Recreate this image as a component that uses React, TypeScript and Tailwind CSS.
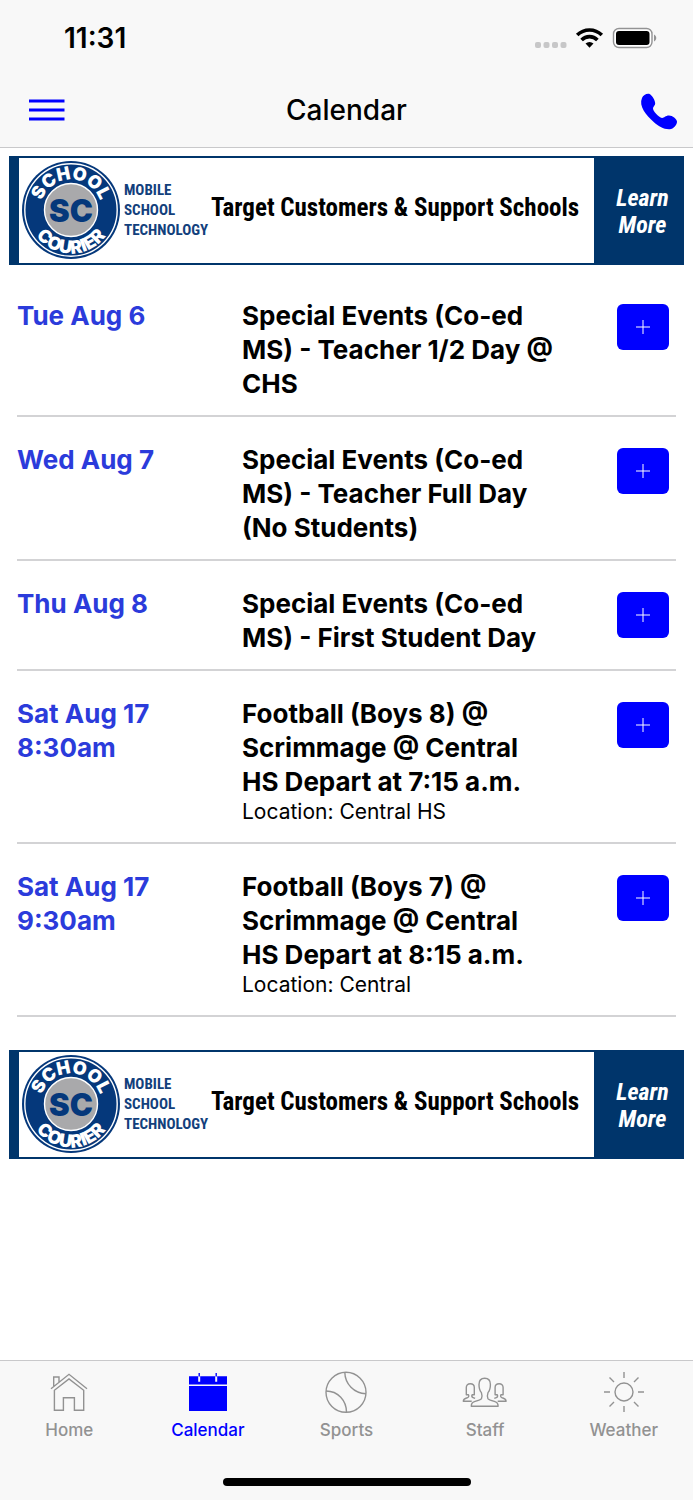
import React, { useState } from "react";

const events = [
  { day: "Tue Aug 6", title: "Special Events (Co-ed MS) - Teacher 1/2 Day @ CHS" },
  { day: "Wed Aug 7", title: "Special Events (Co-ed MS) - Teacher Full Day (No Students)" },
  { day: "Thu Aug 8", title: "Special Events (Co-ed MS) - First Student Day" },
  { day: "Sat Aug 17", time: "8:30am", title: "Football (Boys 8) @ Scrimmage @ Central HS Depart at 7:15 a.m.", location: "Central HS" },
  { day: "Sat Aug 17", time: "9:30am", title: "Football (Boys 7) @ Scrimmage @ Central HS Depart at 8:15 a.m.", location: "Central" },
];

function Seal({ id }: { id: string }) {
  return (
    <svg viewBox="0 0 98 98" className="h-[98px] w-[98px] shrink-0" role="img" aria-label="School Courier">
      <defs>
        <path id={`${id}-top`} d="M18.500 49a30.500 30.500 0 0 1 61 0" />
        <path id={`${id}-bottom`} d="M5.500 49a43.500 43.500 0 0 0 87 0" />
      </defs>
      <circle cx="49" cy="49" r="49" fill="#05387b" />
      <circle cx="49" cy="49" r="46.200" fill="none" stroke="#fff" strokeWidth="1.400" />
      <circle cx="49" cy="49" r="26.500" fill="#a9a9ab" stroke="#fff" strokeWidth="1.400" />
      <g fill="#fff" fontFamily="Inter, sans-serif" fontWeight="900" fontSize="18" textAnchor="middle">
        <text><textPath href={`#${id}-top`} startOffset="50%">SCHOOL</textPath></text>
        <text><textPath href={`#${id}-bottom`} startOffset="50%">COURIER</textPath></text>
      </g>
      <text x="49" y="61" textAnchor="middle" fill="#05387b" fontFamily="Inter, sans-serif" fontWeight="900" fontSize="31">SC</text>
    </svg>
  );
}

function Banner({ id }: { id: string }) {
  return (
    <a
      href="#learn-more"
      className="mx-[9px] flex h-[109px] border-y-2 border-l-[10px] border-[#00356b] bg-white font-['Liberation_Sans_Narrow','Roboto_Condensed','Liberation_Sans',sans-serif] font-bold"
    >
      <span className="flex flex-1 items-center pb-[2px] pl-[3px]">
        <Seal id={id} />
        <span className="ml-1 w-[87px] text-[15px] leading-5 text-[#12407c]">
          MOBILE
          <br />
          SCHOOL
          <br />
          TECHNOLOGY
        </span>
        <span className="flex-1 whitespace-nowrap pb-1 text-[25px] leading-7 text-black">Target Customers &amp; Support Schools</span>
      </span>
      <span className="flex w-[90px] shrink-0 items-center justify-center bg-[#00356b] pl-[7px] pt-[2px] text-center text-[24px] italic leading-[27px] text-white">
        Learn
        <br />
        More
      </span>
    </a>
  );
}

const tabIcon = "h-[44px] w-[46px]";

const tabs = [
  {
    name: "Home",
    icon: (
      <svg viewBox="0 0 46 44" className={tabIcon} fill="none" stroke="currentColor" strokeWidth="1.400">
        <path d="M5 20.700 23 6.300 41 20.700M8.400 22.300V42.300h9V29.700h11V42.300h9.300V22.300L23 11ZM7.700 18V9H13v5" />
      </svg>
    ),
  },
  {
    name: "Calendar",
    icon: (
      <svg viewBox="0 0 46 44" className={tabIcon} fill="currentColor">
        <path d="M4 8.300h38v8.300H4zM4 18h38v25H4z" />
        <path d="M14.200 8v5.700M31.200 8v5.700" stroke="#f8f8f8" strokeWidth="2" />
        <path d="M14.200 5v3.500M31.200 5v3.500" stroke="currentColor" strokeWidth="1.400" />
      </svg>
    ),
  },
  {
    name: "Sports",
    icon: (
      <svg viewBox="0 0 46 45" className="-mb-px h-[45px] w-[46px]" fill="none" stroke="currentColor" strokeWidth="1.400">
        <circle cx="23" cy="24.300" r="20" />
        <path d="M21.800 4.300C22 16 31 25.500 43 25.700M3 23c12 0 20.500 9.500 20.500 21.300" />
      </svg>
    ),
  },
  {
    name: "Staff",
    icon: (
      <svg viewBox="0 0 46 44" className={tabIcon} fill="none" stroke="currentColor" strokeWidth="1.400" strokeLinejoin="round">
        <path d="M9.300 38.200c0-2.700.7-3.900 3.200-4.600 3-.8 6-1.500 7-3 .6-1.500.4-4.500-.1-6C17.500 22.500 17 20 17 16.500c0-4 2-6.200 5.700-6.200s5.700 2.200 5.700 6.200c0 3.500-.5 6-2.400 8.100-.5 1.500-.7 4.500-.1 6 1 1.500 4 2.200 7 3 2.500.7 3.200 1.900 3.200 4.600Z" />
        <path d="M9.700 33.200H1.300c.2-2.700 2.200-2.800 4.300-3.600 1.300-.5 1.400-1.700.9-2.900H4.300V19.500c0-2.500 1.500-3.800 4-3.800s4 1.300 4 3.800v7.200h-2.200c-.5 1.200-.2 2.400 1 2.900l2 .8" />
        <path d="M35.700 33.200h8.400c-.2-2.700-2.200-2.800-4.300-3.600-1.300-.5-1.400-1.700-.9-2.900h2.200V19.500c0-2.500-1.500-3.800-4-3.800s-4 1.300-4 3.800v7.200h2.200c.5 1.200.2 2.400-1 2.900l-2 .8" />
      </svg>
    ),
  },
  {
    name: "Weather",
    icon: (
      <svg viewBox="0 0 46 44" className={tabIcon} fill="none" stroke="currentColor" strokeWidth="1.400">
        <circle cx="23" cy="24" r="9" />
        <path d="M23 4v6M23 38v6M3 24h6M37 24h6M8.500 9.500l4.500 4.500M33 34l4.500 4.500M8.500 38.500l4.500-4.500M33 14l4.500-4.500" />
      </svg>
    ),
  },
];

export default function App() {
  const [active, setActive] = useState("Calendar");
  return (
    <div className="flex min-h-screen flex-col bg-white font-['Inter',sans-serif] text-black">
      <header className="border-b border-[#c9c9cb] bg-[#f8f8f8]">
        <div className="flex h-[76px] items-center justify-between pl-16 pr-9">
          <span className="text-[28px] font-semibold leading-8">11:31</span>
          <svg viewBox="0 0 124 24" className="h-6 w-[124px]" aria-hidden="true">
            <g fill="#c7c7c8">
              <rect x="2" y="16" width="6" height="6" rx="2" />
              <rect x="10.500" y="16" width="6" height="6" rx="2" />
              <rect x="19" y="16" width="6" height="6" rx="2" />
              <rect x="27.500" y="16" width="6" height="6" rx="2" />
            </g>
            <g fill="none" stroke="#000" strokeWidth="3.600">
              <path d="M44.200 9a17.500 17.500 0 0 1 24.600 0" />
              <path d="M48.600 14a11 11 0 0 1 15.800 0" />
            </g>
            <path d="M52.500 17.500a6 6 0 0 1 8 0l-4 4.200Z" />
            <rect x="80.500" y="2.500" width="38.500" height="19" rx="5.500" fill="#fff" stroke="#939394" strokeWidth="1.400" />
            <rect x="83" y="5" width="33.500" height="14" rx="3" />
            <path d="M121 8.500c3 1.500 3 5.500 0 7Z" fill="#939394" />
          </svg>
        </div>
        <div className="grid h-[71px] grid-cols-[1fr_auto_1fr] items-center pb-[3px] pl-7 pr-[15px]">
          <button type="button" aria-label="Menu" className="justify-self-start text-[#0000ff]">
            <svg viewBox="0 0 38 30" className="h-[30px] w-[38px]" stroke="currentColor" strokeWidth="3">
              <path d="M1 6h35.500M1 15h35.500M1 24h35.500" />
            </svg>
          </button>
          <h1 className="pr-[13px] text-[28px] font-medium leading-8">Calendar</h1>
          <button type="button" aria-label="Call" className="justify-self-end text-[#0000ff]">
            <svg viewBox="0 0 40 40" className="h-10 w-10" fill="currentColor">
              <path d="M4 8C5.200 5 9.500 2.800 12 4.300c2.500 1.700 5 6 5.200 9 .1 2.200-1.900 3.200-2.200 4.700-.4 3 5.600 9.300 9 9.900 2 .2 3.200-2.400 7-2.400 3.500 0 7.700 3.500 8 6 .2 3-3.500 7.600-7.300 7.700-6 .3-11.500-3-16-7.200C8 25 .5 16 4 8Z" />
            </svg>
          </button>
        </div>
      </header>

      <main className="flex-1 pt-2">
        <Banner id="seal-a" />
        <ul className="mx-[17px] mb-[33px] mt-2">
          {events.map((e) => (
            <li key={e.title} className="flex items-start border-b-2 border-[#d3d3d5] pb-[14px] pr-[7px] pt-[26px]">
              <p className="w-[225px] shrink-0 text-[26px] font-bold leading-[34px] text-[#2b3bdb]">
                {e.day}
                {e.time && <span className="block">{e.time}</span>}
              </p>
              <div className="min-w-0 flex-1 pr-[60px]">
                <h2 className="text-[26px] font-bold leading-[34px]">{e.title}</h2>
                {e.location && <p className="mb-[3px] text-[21px] leading-[26px]">Location: {e.location}</p>}
              </div>
              <button
                type="button"
                aria-label={`Add ${e.title}`}
                className="mt-[5px] flex h-[46px] w-[52px] shrink-0 items-center justify-center rounded-md bg-[#0000ff] text-white"
              >
                <svg viewBox="0 0 14 14" className="h-[14px] w-[14px]" stroke="currentColor" strokeWidth="1">
                  <path d="M0 7h14M7 0v14" />
                </svg>
              </button>
            </li>
          ))}
        </ul>
        <Banner id="seal-b" />
      </main>

      <footer className="border-t border-[#c9c9cb] bg-[#f8f8f8]">
        <nav className="grid grid-cols-5 pt-[7px]">
          {tabs.map((t) => (
            <button
              key={t.name}
              type="button"
              onClick={() => setActive(t.name)}
              className={`flex flex-col items-center gap-2 ${active === t.name ? "text-[#0000ff]" : "text-[#929292]"}`}
            >
              {t.icon}
              <span className="text-[17px] font-medium leading-5">{t.name}</span>
            </button>
          ))}
        </nav>
        <div className="mx-auto mb-[14px] mt-[38px] h-2 w-[248px] rounded-full bg-black" />
      </footer>
    </div>
  );
}
